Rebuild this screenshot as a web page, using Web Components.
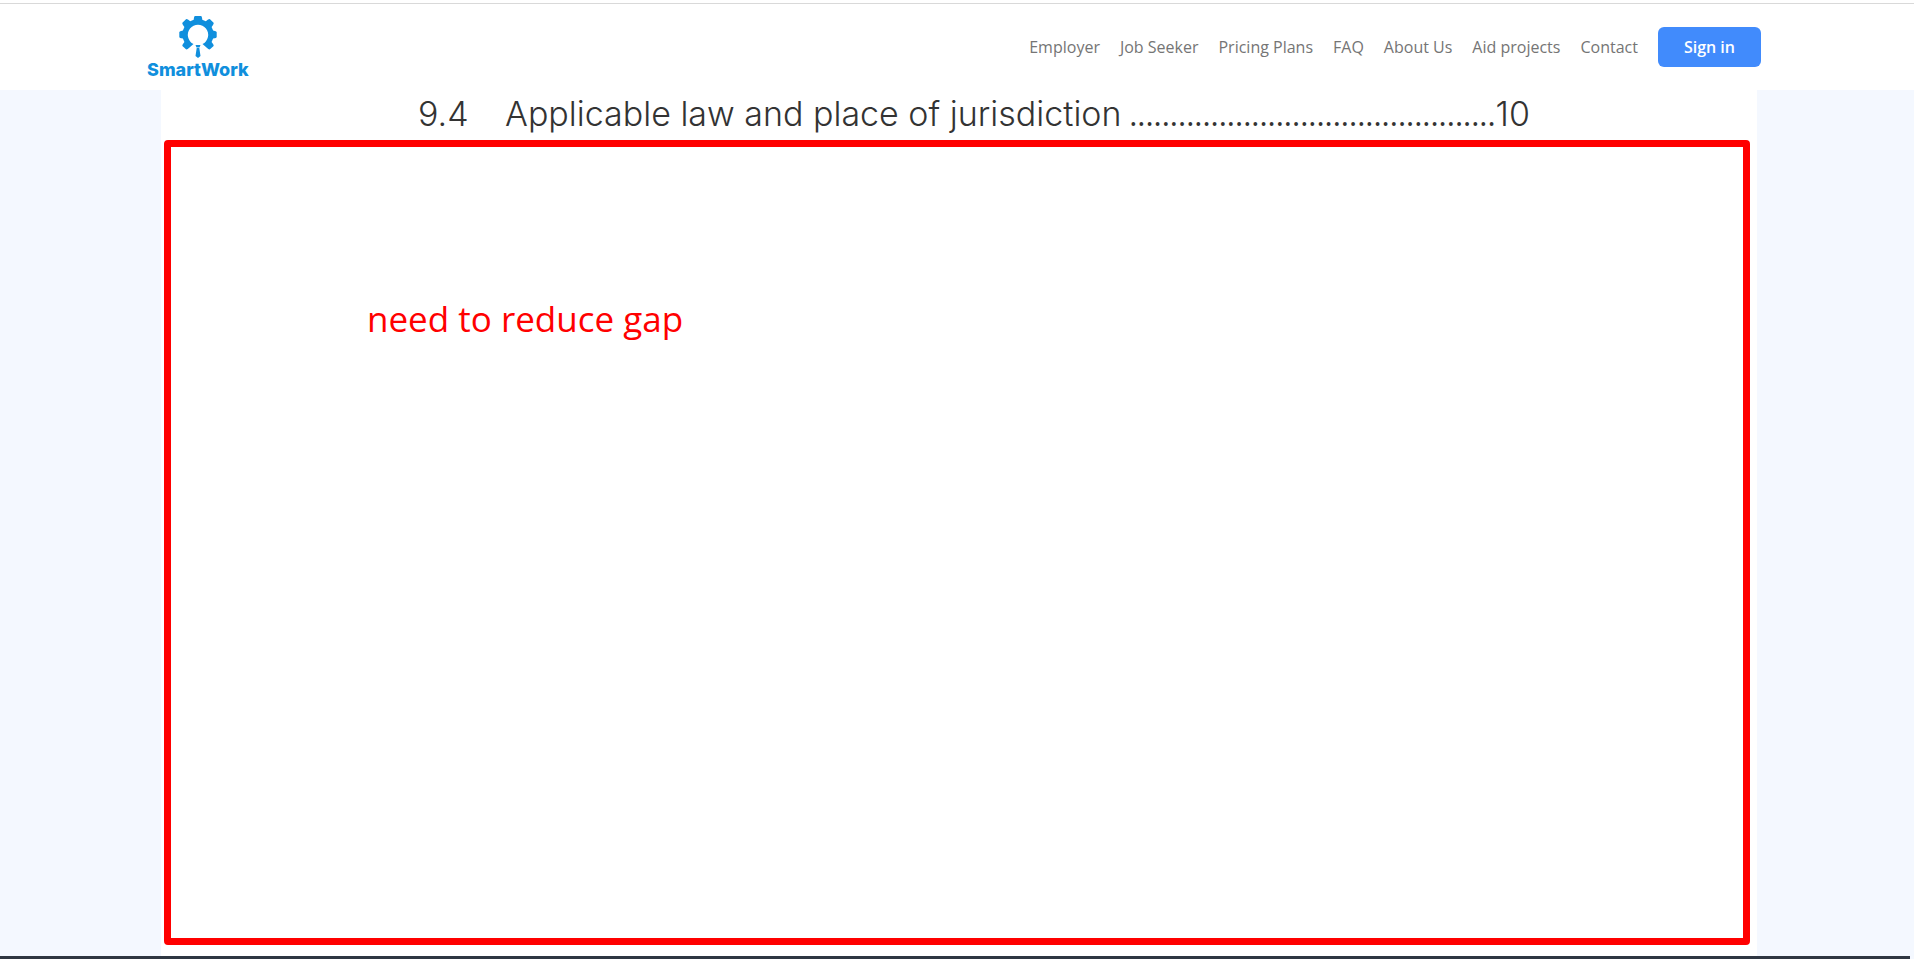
<!DOCTYPE html>
<html lang="en">
<head>
<meta charset="utf-8">
<meta name="viewport" content="width=device-width, initial-scale=1">
<title>SmartWork</title>
<style>
  body { margin: 0; background: #f4f8ff; font-family: "Open Sans", sans-serif; }
</style>
</head>
<body>
<smart-page>
  <smart-header slot="header">
    <smart-logo slot="logo">SmartWork</smart-logo>
    <nav-item href="#employer">Employer</nav-item>
    <nav-item href="#job-seeker">Job Seeker</nav-item>
    <nav-item href="#pricing">Pricing Plans</nav-item>
    <nav-item href="#faq">FAQ</nav-item>
    <nav-item href="#about">About Us</nav-item>
    <nav-item href="#aid">Aid projects</nav-item>
    <nav-item href="#contact">Contact</nav-item>
    <sign-in-button slot="action">Sign in</sign-in-button>
  </smart-header>
  <toc-entry>
    <span slot="number">9.4</span>
    <span slot="title">Applicable law and place of jurisdiction</span>
    <span slot="leader">.............................................</span>
    <span slot="page">10</span>
  </toc-entry>
  <marked-area>need to reduce gap</marked-area>
</smart-page>

<script>
const define = (name, markup, setup) => {
  const template = document.createElement('template');
  template.innerHTML = markup;
  customElements.define(name, class extends HTMLElement {
    constructor() {
      super();
      this.attachShadow({ mode: 'open' }).append(template.content.cloneNode(true));
    }
    connectedCallback() { if (setup) setup(this); }
  });
};

define('smart-page', `
  <style>
    :host { display: flex; flex-direction: column; min-height: 100vh; }
    main { flex: 1; display: flex; flex-direction: column; margin: 0 157px 0 161px; padding: 0 7px 11px 3px; background: #fff; }
    footer { height: 3px; margin-right: 4px; background: #2f3742; }
  </style>
  <slot name="header"></slot>
  <main><slot></slot></main>
  <footer></footer>`);

define('smart-header', `
  <style>
    :host { display: block; background: #fff; padding-top: 3px; }
    header { display: flex; align-items: center; justify-content: space-between; height: 86px;
      padding: 0 153px 0 147px; border-top: 1px solid #d9d9d9; }
    nav { display: flex; align-items: center; gap: 20px; }
  </style>
  <header>
    <slot name="logo"></slot>
    <nav aria-label="Main"><slot></slot><slot name="action"></slot></nav>
  </header>`);

define('smart-logo', `
  <style>
    :host { display: block; }
    a { display: flex; flex-direction: column; align-items: center; color: #108fdd; text-decoration: none;
      font: 800 18px/20px Inter, sans-serif; }
    svg { display: block; width: 42px; height: 45px; }
  </style>
  <a href="#home">
    <svg viewBox="0 0 42 45" aria-hidden="true">
      <path fill="currentColor" fill-rule="evenodd" d="M18 1h6q1 0 1.300 3.800l3.500 1.500Q32 3.600 33 4.200l3.600 3.600q.6 1-2 4.100l1.500 3.500Q39.500 16 39.700 17v5q0 1-3.600 1.500l-1.500 3.500q2.500 3 2 4L33 34.300q-1 .6-3.500-1.800L25.500 29A10.200 10.200 0 1 0 16.500 29L12.500 32.500Q10 34.900 9 34.300L5.400 31q-.5-1 2-4L5.900 23.500Q2.300 23 2.300 22v-5q.2-1 3.600-1.600l1.500-3.500q-2.600-3.100-2-4.100L9 4.200q1-.6 4.200 2.100l3.500-1.500Q17 1 18 1z"/>
      <path fill="currentColor" d="M18.500 30h5l-1 2.400h-3zM19.700 33h2.600l1.200 8-2.500 2-2.500-2z"/>
    </svg>
    <slot></slot>
  </a>`);

define('nav-item', `
  <style>
    :host { display: block; }
    a { color: #757575; text-decoration: none; font-size: 16px; line-height: 24px; white-space: nowrap; }
  </style>
  <a><slot></slot></a>`, el => { el.shadowRoot.querySelector('a').href = el.getAttribute('href'); });

define('sign-in-button', `
  <style>
    :host { display: block; }
    button { display: block; height: 40px; padding: 0 26px; border: 0; border-radius: 6px;
      background: #418bfc; color: #fff; font: 600 16px/24px "Open Sans", sans-serif; }
  </style>
  <button type="button"><slot></slot></button>`);

define('toc-entry', `
  <style>
    :host { display: flex; align-items: baseline; height: 46px; padding: 4px 220px 0 254px;
      font: 300 34px/40px Inter, sans-serif; color: #333; white-space: nowrap; }
    .number { width: 87px; flex: none; }
    .leader { flex: 1; min-width: 0; text-align: right; font: 400 31px/40px "Open Sans", sans-serif; }
  </style>
  <span class="number"><slot name="number"></slot></span>
  <slot name="title"></slot>
  <span class="leader"><slot name="leader"></slot></span>
  <slot name="page"></slot>`);

define('marked-area', `
  <style>
    :host { display: block; flex: 1; border: 7px solid #f00; border-radius: 4px; padding: 148px 196px;
      color: #f00; font-size: 35px; line-height: 48px; }
    p { margin: 0; }
  </style>
  <p><slot></slot></p>`);
</script>
</body>
</html>
